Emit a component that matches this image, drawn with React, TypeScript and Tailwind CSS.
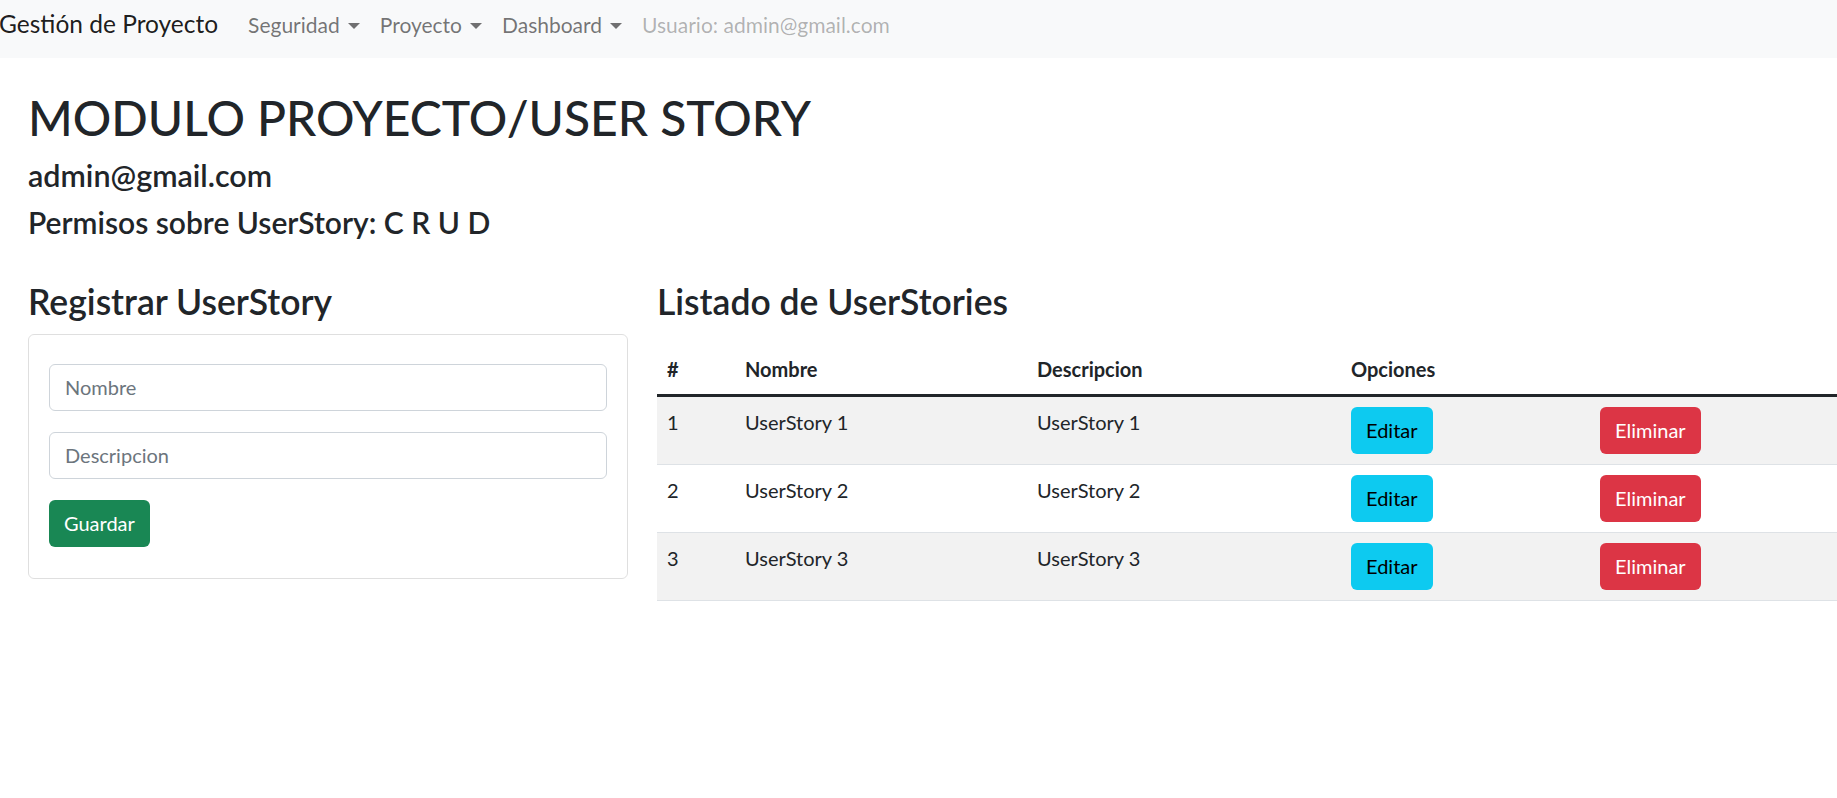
import React from 'react';

const stories = [
  { id: 1, nombre: 'UserStory 1', descripcion: 'UserStory 1' },
  { id: 2, nombre: 'UserStory 2', descripcion: 'UserStory 2' },
  { id: 3, nombre: 'UserStory 3', descripcion: 'UserStory 3' },
];

function NavDrop({ label }: { label: string }) {
  return (
    <a className="flex items-center px-[10px] text-black/55 cursor-pointer">
      {label}
      <span className="ml-[8px] mt-[2px] inline-block w-0 h-0 border-x-[6px] border-x-transparent border-t-[6px] border-t-black/55" />
    </a>
  );
}

export default function App() {
  return (
    <div className="min-h-screen bg-white text-[#212529] text-[20px] overflow-hidden" style={{ fontFamily: 'Lato, "Noto Sans", sans-serif' }}>
      <nav className="h-[58px] pb-[9px] bg-[#f8f9fa] flex items-center whitespace-nowrap text-[21px]">
        <span className="text-[24.5px] text-black/90 mr-[20px] -ml-[1px]">Gestión de Proyecto</span>
        <NavDrop label="Seguridad" />
        <NavDrop label="Proyecto" />
        <NavDrop label="Dashboard" />
        <span className="px-[10px] text-black/30">Usuario: admin@gmail.com</span>
      </nav>

      <main className="pl-[28px]">
        <h1 className="text-[48px] font-medium leading-[1.2] mt-[31px]">MODULO PROYECTO/USER STORY</h1>
        <h4 className="text-[30.5px] font-semibold leading-[1.2] mt-[10px]">admin@gmail.com</h4>
        <h4 className="text-[30px] font-semibold leading-[1.2] mt-[11px]">Permisos sobre UserStory: C R U D</h4>

        <div className="flex mt-[41px] gap-[30px]">
          <section className="w-[600px] shrink-0">
            <h3 className="text-[35.5px] font-semibold leading-[1.2] mb-[10px]">Registrar UserStory</h3>
            <div className="border border-black/[0.125] rounded-[6px] px-[20px] pt-[29px] pb-[31px]">
              <input
                placeholder="Nombre"
                className="block w-full h-[47px] px-[15px] border border-[#ced4da] rounded-[6px] placeholder:text-[#6c757d] outline-none"
              />
              <input
                placeholder="Descripcion"
                className="block w-full h-[47px] mt-[21px] px-[15px] border border-[#ced4da] rounded-[6px] placeholder:text-[#6c757d] outline-none"
              />
              <button className="mt-[21px] h-[47px] px-[15px] rounded-[6px] bg-[#198754] text-white">Guardar</button>
            </div>
          </section>

          <section className="flex-1 min-w-0 -ml-[1px]">
            <h3 className="text-[35.5px] font-semibold leading-[1.2] mb-[20px]">Listado de UserStories</h3>
            <table className="w-full border-collapse text-left">
              <colgroup>
                <col className="w-[78px]" />
                <col className="w-[292px]" />
                <col className="w-[314px]" />
                <col className="w-[249px]" />
                <col />
              </colgroup>
              <thead>
                <tr className="border-b-[3px] border-[#212529]">
                  <th className="px-[10px] py-[10px] font-bold leading-[30px]">#</th>
                  <th className="px-[10px] py-[10px] font-bold leading-[30px]">Nombre</th>
                  <th className="px-[10px] py-[10px] font-bold leading-[30px]">Descripcion</th>
                  <th className="px-[10px] py-[10px] font-bold leading-[30px]">Opciones</th>
                  <th className="px-[10px] py-[10px]"></th>
                </tr>
              </thead>
              <tbody>
                {stories.map((s, i) => (
                  <tr key={s.id} className={`border-b border-[#dee2e6] ${i % 2 === 0 ? 'bg-[#f2f2f2]' : 'bg-white'}`}>
                    <td className="px-[10px] py-[10px] align-top leading-[30px]">{s.id}</td>
                    <td className="px-[10px] py-[10px] align-top leading-[30px]">{s.nombre}</td>
                    <td className="px-[10px] py-[10px] align-top leading-[30px]">{s.descripcion}</td>
                    <td className="px-[10px] py-[10px] align-top">
                      <button className="h-[47px] px-[15px] rounded-[6px] bg-[#0dcaf0] text-black">Editar</button>
                    </td>
                    <td className="px-[10px] py-[10px] align-top">
                      <button className="h-[47px] px-[15px] rounded-[6px] bg-[#dc3545] text-white">Eliminar</button>
                    </td>
                  </tr>
                ))}
              </tbody>
            </table>
          </section>
        </div>
      </main>
    </div>
  );
}
